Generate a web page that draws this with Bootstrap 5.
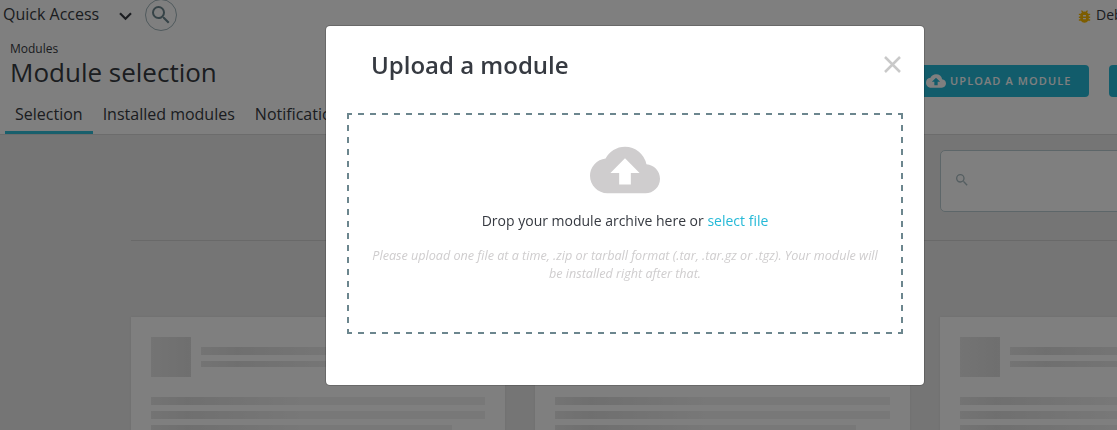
<!DOCTYPE html>
<html lang="en">
<head>
<meta charset="utf-8">
<title>Module selection</title>
<link href="https://cdn.jsdelivr.net/npm/bootstrap@5.3.0/dist/css/bootstrap.min.css" rel="stylesheet">
<style>
html,body{height:430px;overflow:hidden}
body{font-family:"Open Sans","Noto Sans",sans-serif;font-size:16px;line-height:22px;color:#363a41;background:#ebebeb}
.page-head{height:135px;border-bottom:1px solid #d8d8d8}
.topbar{height:31px;padding-left:3px}
.topbar .label{padding-top:3px}
.search-round{width:32px;height:32px;border:1px solid #a0b4ba;margin-left:13px;margin-top:-1px}
.debug{width:39px;white-space:nowrap;font-size:14px}
.crumb{font-size:12px;line-height:16px;padding-top:10px}
.page-title{font-size:26px;line-height:34px;font-weight:400;margin-top:-2px}
.tabs{gap:0;margin:-1px 0 0 5px;height:39px}
.tabs a{color:inherit;text-decoration:none;padding:8px 10px 0;white-space:nowrap}
.tabs a.active{border-bottom:3px solid #30bfd9}
.btn-mod{height:32px;background:#25b9d7;color:#fff;border-radius:4px;font-size:11px;font-weight:600;letter-spacing:1.1px;line-height:32px}
.catalog{width:1213px;padding:0 15px;margin-left:116px}
.filter{height:106px;padding-top:15px;border-bottom:1px solid #d3d3d3}
.filter-box{width:404px;height:62px;border:1px solid #bbcdd2;border-radius:5px;margin-left:809px;padding-left:13px}
.deck{margin-top:76px}
.tile{background:#fff;height:180px;padding:20px;box-shadow:0 0 3px rgba(0,0,0,.08)}
.bone{background:linear-gradient(to right,#e8e8e8 0,#dfdfdf 36px,#f0f0f0 150px);height:8px}
.bone-sq{width:40px;height:40px}
.modal-dialog.upload{width:600px;max-width:600px;margin:25px 0 0 325px}
.upload .modal-content{height:361px;border-radius:5px;padding:0 21px;color:#363a41}
.upload .top{height:87px;padding:23px 0 0 24px}
.upload h2{font-size:24px;line-height:32px;font-weight:600;margin:0}
.drop{--dash:#6c868e 0 6px,transparent 6px 12px;height:221px;padding:27px 22px 0;
background:
repeating-linear-gradient(to right,var(--dash)) -1px 0/600px 2px no-repeat,
repeating-linear-gradient(to right,var(--dash)) -1px 100%/600px 2px no-repeat,
repeating-linear-gradient(to bottom,var(--dash)) 0 0/2px 240px no-repeat,
repeating-linear-gradient(to bottom,var(--dash)) 100% 0/2px 240px no-repeat}
.drop p{font-size:14px;line-height:20px;margin:6px 0 0}
.drop .pick{color:#25b9d7;text-decoration:none}
.drop .note{font-size:12.6px;line-height:18px;font-style:italic;color:#cfcdce;margin-top:16px}
svg{display:block;flex:none}
</style>
</head>
<body>
<div>
  <header class="page-head bg-white">
    <div class="topbar d-flex">
      <span class="label">Quick Access</span>
      <svg style="margin:12px 0 0 20px" width="13" height="9" viewBox="0 0 13 9"><path d="M1 1.3 6.5 6.8 12 1.3" fill="none" stroke="#363a41" stroke-width="2.2"/></svg>
      <span class="search-round rounded-circle d-flex align-items-center justify-content-center"><svg style="margin-top:-1px" width="24" height="24" viewBox="0 0 24 24" fill="#6c868e"><path d="M15.5 14h-.79l-.28-.27A6.47 6.47 0 0 0 16 9.500 6.500 6.500 0 1 0 9.500 16c1.610 0 3.090-.590 4.230-1.570l.270.280v.790l5 4.990L20.490 19l-4.990-5zm-6 0a4.500 4.500 0 1 1 0-9 4.500 4.500 0 0 1 0 9z"/></svg></span>
      <span class="debug ms-auto d-flex"><svg style="margin:8px 3px 0 -2px" width="17" height="17" viewBox="0 0 24 24" fill="#fbbb00"><path d="M20 8h-2.810a5.990 5.990 0 0 0-1.820-1.960L17 4.410 15.590 3l-2.170 2.170a6 6 0 0 0-2.830 0L8.410 3 7 4.410l1.620 1.630A6 6 0 0 0 6.810 8H4v2h2.090A6 6 0 0 0 6 11v1H4v2h2v1l.09 1H4v2h2.810a5.990 5.990 0 0 0 10.380 0H20v-2h-2.090l.09-1v-1h2v-2h-2v-1l-.09-1H20V8zm-6 8h-4v-2h4v2zm0-4h-4v-2h4v2z"/></svg><span class="pt-1">Debug mode</span></span>
    </div>
    <div class="d-flex justify-content-between">
      <div style="margin-left:10px">
        <div class="crumb">Modules</div>
        <h1 class="page-title mb-0">Module selection</h1>
      </div>
      <div class="d-flex" style="padding-top:34px">
        <div class="btn-mod d-flex" style="width:175px;padding-left:12px"><svg class="align-self-center me-1" width="20" height="20" viewBox="0 0 24 24" fill="#fff"><path d="M19.350 10.040A7.490 7.490 0 0 0 12 4C9.110 4 6.600 5.640 5.350 8.040A5.994 5.994 0 0 0 0 14c0 3.310 2.690 6 6 6h13c2.760 0 5-2.240 5-5 0-2.640-2.050-4.780-4.650-4.960zM14 13v4h-4v-4H7l5-5 5 5h-3z"/></svg>UPLOAD A MODULE</div>
        <div class="btn-mod" style="width:28px;margin:0 -20px 0 20px"></div>
      </div>
    </div>
    <nav class="tabs d-flex" style="margin-top:-2px"><a class="active" href="#">Selection</a><a href="#">Installed modules</a><a href="#">Notifications</a></nav>
  </header>
  <main class="catalog">
    <div class="filter"><div class="filter-box bg-white d-flex align-items-center"><svg style="margin-top:-2px" width="16" height="16" viewBox="0 0 24 24" fill="#a9bcc2"><path d="M15.500 14h-.790l-.280-.270A6.470 6.470 0 0 0 16 9.500 6.500 6.500 0 1 0 9.500 16c1.610 0 3.090-.590 4.230-1.570l.270.280v.790l5 4.990L20.490 19l-4.990-5zm-6 0a4.500 4.500 0 1 1 0-9 4.500 4.500 0 0 1 0 9z"/></svg></div></div>
    <div class="deck row flex-nowrap" style="--bs-gutter-x:30px">
      <div class="col-4"><div class="tile"><div class="d-flex"><div class="bone bone-sq"></div><div class="flex-fill" style="padding:10px 0 0 10px"><div class="bone"></div><div class="bone" style="height:6px;margin-top:6px"></div></div></div><div class="bone" style="margin-top:20px"></div><div class="bone" style="margin-top:6px"></div><div class="bone" style="margin-top:6px;width:90%"></div></div></div>
      <div class="col-4"><div class="tile"><div class="d-flex"><div class="bone bone-sq"></div><div class="flex-fill" style="padding:10px 0 0 10px"><div class="bone"></div><div class="bone" style="height:6px;margin-top:6px"></div></div></div><div class="bone" style="margin-top:20px"></div><div class="bone" style="margin-top:6px"></div><div class="bone" style="margin-top:6px;width:90%"></div></div></div>
      <div class="col-4"><div class="tile"><div class="d-flex"><div class="bone bone-sq"></div><div class="flex-fill" style="padding:10px 0 0 10px"><div class="bone"></div><div class="bone" style="height:6px;margin-top:6px"></div></div></div><div class="bone" style="margin-top:20px"></div><div class="bone" style="margin-top:6px"></div><div class="bone" style="margin-top:6px;width:90%"></div></div></div>
    </div>
  </main>
</div>
<div class="modal-backdrop show"></div>
<div class="modal d-block overflow-hidden" tabindex="-1">
  <div class="modal-dialog upload">
    <div class="modal-content">
      <div class="top d-flex justify-content-between">
        <h2>Upload a module</h2>
        <svg style="margin:7px 2px 0 0" width="17" height="17" viewBox="0 0 17 17"><path d="M1 1l15 15M16 1 1 16" stroke="#c9c9c9" stroke-width="2.500"/></svg>
      </div>
      <div class="drop text-center">
        <svg class="mx-auto" width="70" height="70" viewBox="0 0 24 24" fill="#cfcdce" style="margin-top:-5px"><path d="M19.350 10.040A7.490 7.490 0 0 0 12 4C9.110 4 6.600 5.640 5.350 8.040A5.994 5.994 0 0 0 0 14c0 3.310 2.690 6 6 6h13c2.760 0 5-2.240 5-5 0-2.640-2.050-4.780-4.650-4.960zM14 13v4h-4v-4H7l5-5 5 5h-3z"/></svg>
        <p>Drop your module archive here or <a class="pick" href="#">select file</a></p>
        <p class="note">Please upload one file at a time, .zip or tarball format (.tar, .tar.gz or .tgz). Your module will be installed right after that.</p>
      </div>
    </div>
  </div>
</div>
<script src="https://cdn.jsdelivr.net/npm/bootstrap@5.3.0/dist/js/bootstrap.bundle.min.js"></script>
</body>
</html>
